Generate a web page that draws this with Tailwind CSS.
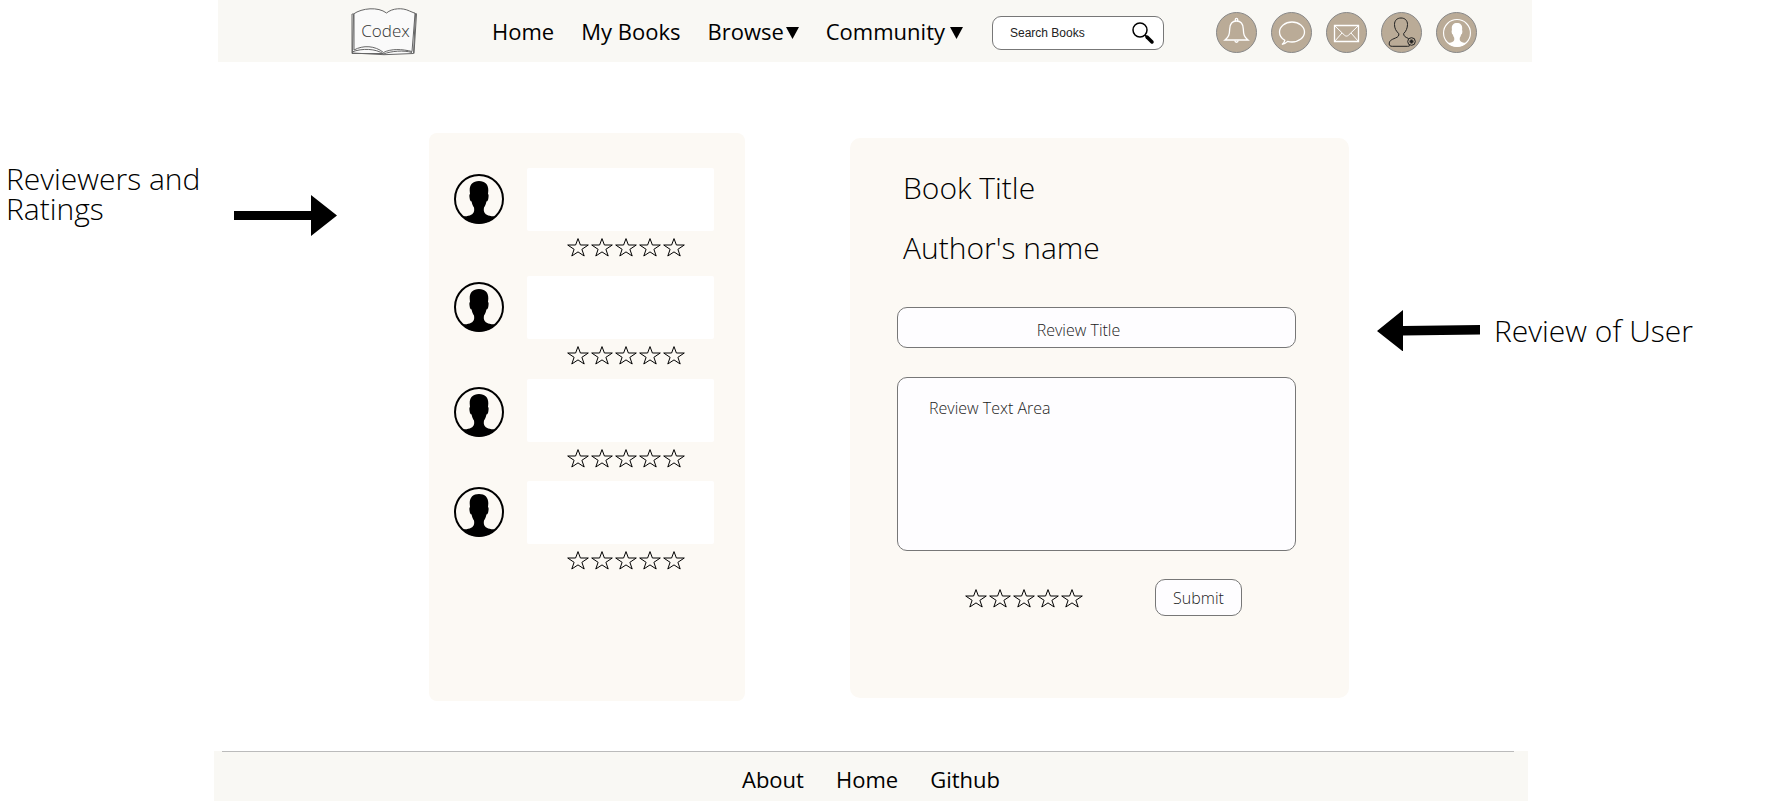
<!DOCTYPE html>
<html lang="en">
<head>
<meta charset="utf-8">
<meta name="viewport" content="width=device-width, initial-scale=1">
<title>Codex – Review</title>
<script src="https://cdn.jsdelivr.net/npm/@tailwindcss/browser@4"></script>
</head>
<body class="min-h-screen flex flex-col bg-white text-black font-['Open_Sans',sans-serif]">

<!-- Shared icon shapes -->
<svg class="hidden" aria-hidden="true">
  <symbol id="star" viewBox="0 0 24 20">
    <path d="M12 1.600 14.400 8H22.300l-6.400 4.300L18.200 19 12 14.900 5.800 19l2.300-6.700L1.700 8h7.900z" fill="none" stroke="currentColor" stroke-width="1"/>
  </symbol>
  <symbol id="avatar" viewBox="0 0 50 50">
    <circle cx="25" cy="25" r="24" fill="none" stroke="currentColor" stroke-width="2"/>
    <path fill="currentColor" d="M25 7c-6 0-9.500 3.500-9.300 9.500l.3 3.500c-.8.5-.7 2-.4 4 .3 2 .8 3.500 2 3.600.4 2.400 1.200 4.400 2.400 5.900.3 2 .3 3.500-.3 4.800-1.500 3-5.200 4-11.200 4.200C12.500 47 18.500 49.500 25 49.500S37.500 47 41.500 42.500c-6-.2-9.700-1.200-11.200-4.200-.6-1.300-.6-2.800-.3-4.800 1.200-1.500 2-3.500 2.400-5.900 1.200-.1 1.700-1.600 2-3.600.3-2 .4-3.500-.4-4l.3-3.500C34.500 10.500 31 7 25 7z"/>
  </symbol>
</svg>

<header class="ml-[218px] mr-[236px] h-[62px] shrink-0 flex items-center bg-[#f9f8f4] pl-[132px] pr-[55px]">
  <a href="#" class="relative w-[68px] h-[50px] flex items-center justify-center pl-[3px]" aria-label="Codex">
    <svg class="absolute inset-0 size-full" viewBox="0 0 68 50" fill="none" stroke="#666" stroke-width="1" aria-hidden="true">
      <path fill="#fafafa" d="M3.500 8C12 2 28 .5 36.500 7c6-5 16-5.500 23-2l6 2.500-2 40-29.500 1.200L2.500 47z"/>
      <path d="M4 8v36c9-5 21-4.500 29.500 2.500C41 42.500 52 43 62 45.500L65 8"/>
      <path d="M2 8v39.500h31.500M2 46C12 42 26 42.500 33.500 48c8-3 20-4 28.500-1.500M66.500 8l-2.500 39.500"/>
      <path stroke="#777" d="M2 8h2M64 7l3 1"/>
    </svg>
    <span class="relative text-[17px] font-light text-[#333]">Codex</span>
  </a>

  <nav class="ml-[74px] flex items-center gap-[27px] text-[22px] leading-[30px]">
    <a href="#">Home</a>
    <a href="#">My Books</a>
    <button type="button" class="flex items-center gap-[2px]">Browse
      <svg class="w-[13px] h-3 mt-1" viewBox="0 0 13 12" aria-hidden="true"><path d="M0 0h13L6.500 12z"/></svg>
    </button>
    <button type="button" class="flex items-center gap-[5px]">Community
      <svg class="w-[13px] h-3 mt-1" viewBox="0 0 13 12" aria-hidden="true"><path d="M0 0h13L6.500 12z"/></svg>
    </button>
  </nav>

  <form class="ml-auto w-[172px] h-[34px] mt-1 flex items-center rounded-[9px] border border-[#777] bg-white pl-[17px] pr-2">
    <input type="search" aria-label="Search Books" placeholder="Search Books" class="min-w-0 flex-1 text-[12px] font-['Liberation_Sans',sans-serif] text-[#222] placeholder:text-[#222] outline-none">
    <button type="button" aria-label="Search">
      <svg class="size-6" viewBox="0 0 24 24" fill="none" stroke="#000" aria-hidden="true">
        <circle cx="9" cy="9" r="7" stroke-width="1.500"/>
        <path d="M14 14l1.500 1.500" stroke-width="1.500"/>
        <path d="M16 16l5 5" stroke-width="3.500" stroke-linecap="round"/>
      </svg>
    </button>
  </form>

  <div class="ml-[52px] mt-[3px] flex gap-[14px] text-white">
    <button type="button" aria-label="Notifications">
      <svg class="size-[41px]" viewBox="0 0 41 41" fill="none" stroke="currentColor" stroke-width="1.300" aria-hidden="true">
        <circle cx="20.500" cy="20.500" r="20" fill="#baab97" stroke="#888" stroke-width="1"/>
        <path d="M9 28c4-3 4.500-6 4.700-11 .2-5 2.500-8 6.800-8s6.600 3 6.800 8c.2 5 .7 8 4.700 11z"/>
        <path d="M19.300 9V7.500a1.200 1.200 0 0 1 2.400 0V9M18.800 28.500c.3 2.300 3.100 2.300 3.400 0"/>
      </svg>
    </button>
    <button type="button" aria-label="Messages">
      <svg class="size-[41px]" viewBox="0 0 41 41" fill="none" stroke="currentColor" stroke-width="1.300" aria-hidden="true">
        <circle cx="20.500" cy="20.500" r="20" fill="#baab97" stroke="#888" stroke-width="1"/>
        <path d="M13.800 28.300C10.600 26.500 8.500 23.500 8.500 20c0-5.500 5.600-10 12.500-10s12.500 4.500 12.500 10S27.900 30 21 30c-1.500 0-3-.2-4.300-.6-1.600 1.600-3.500 2.600-5.700 3 1.500-1.200 2.500-2.500 2.800-4.100z"/>
      </svg>
    </button>
    <button type="button" aria-label="Mail">
      <svg class="size-[41px]" viewBox="0 0 41 41" fill="none" stroke="currentColor" stroke-width="1.300" aria-hidden="true">
        <circle cx="20.500" cy="20.500" r="20" fill="#baab97" stroke="#888" stroke-width="1"/>
        <path d="M8.500 13.500h24v16h-24z"/>
        <path stroke-width="1" d="M8.500 13.500l10 9.700c1.300 1.200 2.700 1.200 4 0l10-9.700M8.500 29.500l7.500-8.500M32.500 29.500L25 21"/>
      </svg>
    </button>
    <button type="button" aria-label="Add friend">
      <svg class="size-[41px]" viewBox="0 0 41 41" fill="none" stroke="#222" stroke-width="1" aria-hidden="true">
        <circle cx="20.500" cy="20.500" r="20" fill="#baab97" stroke="#888"/>
        <path d="M27.500 26.500c-3.500-1.500-5-2.500-4.800-5 2.300-2 3.800-5.500 3.800-9C26.500 8.500 24 6 20 6s-6.500 2.500-6.500 6.500c0 3.500 1.500 7 4.300 9 .4 2.300-.8 3.500-3.300 4.500-4.500 1.800-6.300 2.800-6.300 6 0 1.500 1 2.300 3 2.300h15.500c1 0 1.700-.3 2.300-.9"/>
        <circle cx="30.500" cy="29.500" r="3.800"/>
        <path stroke-width="2" d="M28.500 29.500h4M30.500 27.500v4"/>
      </svg>
    </button>
    <button type="button" aria-label="Profile" class="size-[41px] flex items-center justify-center rounded-full border border-[#888] bg-[#baab97]">
      <svg class="size-7" aria-hidden="true"><use href="#avatar"/></svg>
    </button>
  </div>
</header>

<main class="flex-1 grid grid-cols-[429fr_316fr_105fr_499fr_419fr] items-start pt-[71px]">

  <aside class="pl-1 pt-[31px] flex">
    <h2 class="w-[224px] pl-[2px] text-[30px] leading-[30px] font-light">Reviewers and Ratings</h2>
    <svg class="mt-[31px] ml-[6px] w-[103px] h-[41px] shrink-0" viewBox="0 0 103 41" aria-hidden="true"><path d="M0 16h77V0l26 20.500L77 41V25H0z"/></svg>
  </aside>

  <section aria-label="Reviewers and Ratings" class="h-[568px] rounded-lg bg-[#fcf9f4] pt-[35px] pl-[25px] pr-[31px]">
    <ul>
      <li class="flex items-start gap-[23px] pb-[19px]">
        <svg class="mt-[6px] size-[50px] shrink-0" role="img" aria-label="Reviewer"><use href="#avatar"/></svg>
        <div class="flex-1">
          <div class="h-[63px] rounded-xs bg-white"></div>
          <div class="mt-[6px] flex justify-center pl-[10px]" role="img" aria-label="Rating">
            <svg class="w-6 h-5"><use href="#star"/></svg><svg class="w-6 h-5"><use href="#star"/></svg><svg class="w-6 h-5"><use href="#star"/></svg><svg class="w-6 h-5"><use href="#star"/></svg><svg class="w-6 h-5"><use href="#star"/></svg>
          </div>
        </div>
      </li>
      <li class="flex items-start gap-[23px] pb-[14px]">
        <svg class="mt-[6px] size-[50px] shrink-0" role="img" aria-label="Reviewer"><use href="#avatar"/></svg>
        <div class="flex-1">
          <div class="h-[63px] rounded-xs bg-white"></div>
          <div class="mt-[6px] flex justify-center pl-[10px]" role="img" aria-label="Rating">
            <svg class="w-6 h-5"><use href="#star"/></svg><svg class="w-6 h-5"><use href="#star"/></svg><svg class="w-6 h-5"><use href="#star"/></svg><svg class="w-6 h-5"><use href="#star"/></svg><svg class="w-6 h-5"><use href="#star"/></svg>
          </div>
        </div>
      </li>
      <li class="flex items-start gap-[23px] pb-[13px]">
        <svg class="mt-2 size-[50px] shrink-0" role="img" aria-label="Reviewer"><use href="#avatar"/></svg>
        <div class="flex-1">
          <div class="h-[63px] rounded-xs bg-white"></div>
          <div class="mt-[6px] flex justify-center pl-[10px]" role="img" aria-label="Rating">
            <svg class="w-6 h-5"><use href="#star"/></svg><svg class="w-6 h-5"><use href="#star"/></svg><svg class="w-6 h-5"><use href="#star"/></svg><svg class="w-6 h-5"><use href="#star"/></svg><svg class="w-6 h-5"><use href="#star"/></svg>
          </div>
        </div>
      </li>
      <li class="flex items-start gap-[23px]">
        <svg class="mt-[6px] size-[50px] shrink-0" role="img" aria-label="Reviewer"><use href="#avatar"/></svg>
        <div class="flex-1">
          <div class="h-[63px] rounded-xs bg-white"></div>
          <div class="mt-[6px] flex justify-center pl-[10px]" role="img" aria-label="Rating">
            <svg class="w-6 h-5"><use href="#star"/></svg><svg class="w-6 h-5"><use href="#star"/></svg><svg class="w-6 h-5"><use href="#star"/></svg><svg class="w-6 h-5"><use href="#star"/></svg><svg class="w-6 h-5"><use href="#star"/></svg>
          </div>
        </div>
      </li>
    </ul>
  </section>

  <form class="col-start-4 mt-[5px] h-[560px] rounded-[10px] bg-[#fcf9f4] pt-[30px] pl-[47px] pr-[53px] flex flex-col font-light">
    <h1 class="pl-[6px] text-[30px] leading-[40px]">Book Title</h1>
    <p class="mt-5 pl-[6px] text-[30px] leading-[40px]">Author's name</p>
    <input type="text" aria-label="Review Title" placeholder="Review Title" class="mt-[39px] h-[41px] shrink-0 rounded-[10px] border border-[#777] bg-[#fefdff] pr-[36px] pt-1 text-center text-[16px] placeholder:text-[#222]">
    <textarea aria-label="Review Text Area" placeholder="Review Text Area" class="mt-[29px] h-[174px] shrink-0 resize-none rounded-[10px] border border-[#777] bg-[#fefdff] pl-[31px] pt-[18px] text-[16px] leading-6 placeholder:text-[#222]"></textarea>
    <div class="mt-[28px] flex items-center pl-[67px]">
      <fieldset class="flex" aria-label="Your rating">
        <label class="relative"><input type="radio" name="rating" value="1" class="sr-only" aria-label="1 star"><svg class="w-6 h-5"><use href="#star"/></svg></label>
        <label class="relative"><input type="radio" name="rating" value="2" class="sr-only" aria-label="2 stars"><svg class="w-6 h-5"><use href="#star"/></svg></label>
        <label class="relative"><input type="radio" name="rating" value="3" class="sr-only" aria-label="3 stars"><svg class="w-6 h-5"><use href="#star"/></svg></label>
        <label class="relative"><input type="radio" name="rating" value="4" class="sr-only" aria-label="4 stars"><svg class="w-6 h-5"><use href="#star"/></svg></label>
        <label class="relative"><input type="radio" name="rating" value="5" class="sr-only" aria-label="5 stars"><svg class="w-6 h-5"><use href="#star"/></svg></label>
      </fieldset>
      <button type="button" class="ml-[71px] w-[87px] h-[37px] rounded-[10px] border border-[#777] bg-[#fefdff] text-[16px] text-[#222]">Submit</button>
    </div>
  </form>

  <aside class="pl-7 pt-[177px] flex items-start">
    <svg class="w-[103px] h-[41px] shrink-0" viewBox="0 0 103 41" aria-hidden="true"><path d="M103 15L26 16V0L0 21l26 20.500V25.500l77-1z"/></svg>
    <h2 class="ml-[14px] text-[30px] leading-[42px] font-light whitespace-nowrap">Review of User</h2>
  </aside>
</main>

<footer class="ml-[214px] mr-[240px] h-[50px] shrink-0 flex flex-col bg-[#f9f8f4]">
  <hr class="ml-2 mr-[14px] border-t border-[#bbb]">
  <nav class="flex-1 flex items-center justify-center gap-8 text-[22px] leading-[30px] pt-1">
    <a href="#">About</a>
    <a href="#">Home</a>
    <a href="#">Github</a>
  </nav>
</footer>
</body>
</html>
